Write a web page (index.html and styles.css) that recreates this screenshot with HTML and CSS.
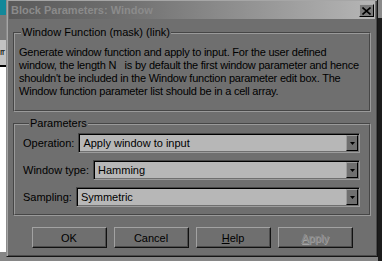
FILE: index.html
```html
<!DOCTYPE html>
<html lang="en">
  <head>
    <meta charset="UTF-8" />
    <title>Block Parameters: Window</title>
    <link rel="stylesheet" href="styles.css">
  </head>
  <body>
    <div class="escritorio">
      <div class="fondo teal"></div>
      <div class="fondo barra"></div>
      <div class="fondo menu">rr</div>
      <div class="fondo hoja"></div>
      <div class="fondo derecha"></div>

      <div class="dialogo">
        <div class="titulo">
          <span class="titulo-texto">Block Parameters: Window</span>
          <span class="cerrar">
            <svg width="9" height="8" viewBox="0 0 9 8"><path d="M0.5 0.5 L8.5 7.5 M8.5 0.5 L0.5 7.5" stroke="#000" stroke-width="1.6"/></svg>
          </span>
        </div>

        <div class="contenido">
          <fieldset class="grupo descripcion">
            <legend>Window Function (mask) (link)</legend>
            <p>Generate window function and apply to input. For the user defined<br>
            window, the length N&nbsp;&nbsp; is by default the first window parameter and hence<br>
            shouldn't be included in the Window function parameter edit box. The<br>
            Window function parameter list should be in a cell array.</p>
          </fieldset>

          <fieldset class="grupo parametros">
            <legend>Parameters</legend>
            <div class="fila">
              <label>Operation:</label>
              <div class="combo"><span class="valor">Apply window to input</span><span class="flecha"><svg width="5" height="3" viewBox="0 0 5 3"><path d="M0 0 H5 L2.5 3 Z" fill="#000"/></svg></span></div>
            </div>
            <div class="fila">
              <label>Window type:</label>
              <div class="combo"><span class="valor">Hamming</span><span class="flecha"><svg width="5" height="3" viewBox="0 0 5 3"><path d="M0 0 H5 L2.5 3 Z" fill="#000"/></svg></span></div>
            </div>
            <div class="fila">
              <label>Sampling:</label>
              <div class="combo"><span class="valor">Symmetric</span><span class="flecha"><svg width="5" height="3" viewBox="0 0 5 3"><path d="M0 0 H5 L2.5 3 Z" fill="#000"/></svg></span></div>
            </div>
          </fieldset>

          <div class="botones">
            <button type="button">OK</button>
            <button type="button">Cancel</button>
            <button type="button"><u>H</u>elp</button>
            <button type="button" class="inactivo" disabled><u>A</u>pply</button>
          </div>
        </div>
      </div>
    </div>
  </body>
</html>
```

FILE: styles.css
```css
body {
  margin: 0;
  font-family: "Liberation Sans", Arial, sans-serif;
  font-size: 11px;
  background: #858585;
}
.escritorio {
  position: relative;
  width: 382px;
  height: 261px;
  overflow: hidden;
  background: #868686;
}
.fondo {
  position: absolute;
  left: 0;
  width: 6px;
}
.teal {
  top: 0;
  height: 15px;
  background: #12889a;
}
.barra {
  top: 15px;
  height: 25px;
  background: #7a7a7a;
}
.menu {
  top: 40px;
  height: 25px;
  background: #c2c2c2;
  line-height: 25px;
  font-size: 9px;
  letter-spacing: -1px;
}
.hoja {
  top: 65px;
  height: 186px;
  background: #fff;
  border-top: 1px solid #000;
  box-shadow: inset 0 19px 0 -18px #000, inset 0 63px 0 -62px #000;
}
.derecha {
  left: 378px;
  top: 0;
  height: 261px;
  width: 4px;
  background: linear-gradient(#8a8a8a 0 18px, #1c1c1c 18px);
}

/* ventana */
.dialogo {
  position: absolute;
  left: 6px;
  top: -1px;
  width: 372px;
  height: 258px;
  box-sizing: border-box;
  background: #6f6f6f;
  border-top: 1px solid #8c8c8c;
  border-left: 1px solid #8c8c8c;
  border-right: 1px solid #151515;
  border-bottom: 1px solid #151515;
  box-shadow: inset 1px 1px 0 #a6a6a6, inset -1px -1px 0 #4a4a4a;
  padding: 1px 2px 2px 2px;
  display: flex;
  flex-direction: column;
}
.titulo {
  height: 18px;
  display: flex;
  align-items: center;
  justify-content: space-between;
  background: linear-gradient(to right, #5a5a5a, #6e6e6e 30%, #b6b6b6);
}
.titulo-texto {
  color: #8b8b8b;
  font-weight: bold;
  padding-left: 2px;
}
.cerrar {
  width: 15px;
  height: 13px;
  margin-right: 1px;
  margin-top: 1px;
  box-sizing: border-box;
  background: #7a7a7a;
  border-top: 1px solid #b0b0b0;
  border-left: 1px solid #b0b0b0;
  border-right: 1px solid #000;
  border-bottom: 1px solid #000;
  display: flex;
  align-items: center;
  justify-content: center;
}
.contenido {
  padding: 7px 4px 0 4px;
}
.grupo {
  margin: 0;
  border: 2px groove #9a9a9a;
  padding: 0;
  min-width: 0;
}
.grupo legend {
  padding: 0 1px;
  margin-left: 6px;
  line-height: 13px;
}
.descripcion p {
  margin: 7px 4px 12px 4px;
  line-height: 13px;
  white-space: nowrap;
  letter-spacing: -0.22px;
}
.parametros {
  margin-top: 5px;
  padding: 3px 9px 7px 8px;
  display: flex;
  flex-direction: column;
  gap: 7px;
}
.fila {
  display: flex;
  align-items: center;
  gap: 4px;
}
.combo {
  flex: 1;
  height: 20px;
  box-sizing: border-box;
  background: #b7b7b7;
  border-top: 1px solid #474747;
  border-left: 1px solid #474747;
  border-right: 1px solid #9c9c9c;
  border-bottom: 1px solid #9c9c9c;
  box-shadow: inset 1px 1px 0 #000, inset -1px -1px 0 #6f6f6f;
  display: flex;
  align-items: center;
  padding: 1px;
}
.valor {
  flex: 1;
  padding-left: 3px;
}
.flecha {
  width: 12px;
  height: 16px;
  box-sizing: border-box;
  background: #6f6f6f;
  border-top: 1px solid #9c9c9c;
  border-left: 1px solid #9c9c9c;
  border-right: 1px solid #000;
  border-bottom: 1px solid #000;
  display: flex;
  align-items: center;
  justify-content: center;
}
.botones {
  display: flex;
  justify-content: center;
  gap: 7px;
  margin-top: 11px;
}
.botones button {
  width: 75px;
  height: 21px;
  font-family: inherit;
  font-size: 11px;
  color: #000;
  background: #6f6f6f;
  border-top: 1px solid #a2a2a2;
  border-left: 1px solid #a2a2a2;
  border-right: 1px solid #111;
  border-bottom: 1px solid #111;
  box-shadow: inset -1px -1px 0 #4c4c4c;
  padding: 0;
}
.botones .inactivo {
  color: #8a8a8a;
  text-shadow: 1px 1px 0 #a4a4a4;
}
```
